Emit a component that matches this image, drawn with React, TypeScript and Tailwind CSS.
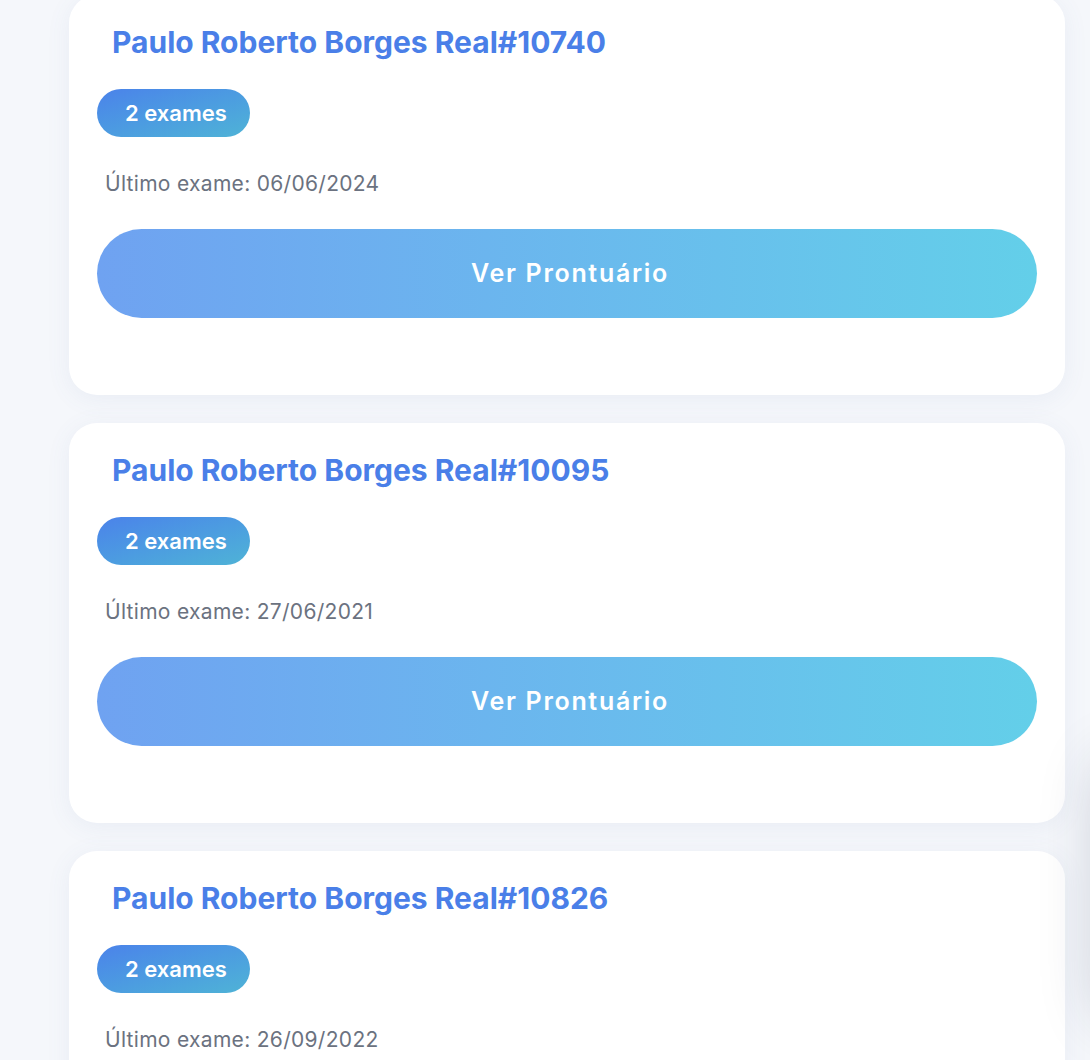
const patients = [
  { name: "Paulo Roberto Borges Real#10740", exams: 2, last: "06/06/2024" },
  { name: "Paulo Roberto Borges Real#10095", exams: 2, last: "27/06/2021" },
  { name: "Paulo Roberto Borges Real#10826", exams: 2, last: "26/09/2022" },
];

function PatientCard({ name, exams, last }: { name: string; exams: number; last: string }) {
  return (
    <li className="flex flex-col bg-white rounded-[28px] shadow-[0_4px_24px_rgba(90,110,170,0.08)] px-7 pt-[26px] pb-[77px] h-[400px] shrink-0">
      <h2 className="pl-[15px] text-[30px] leading-[42px] font-bold text-[#4a7fe8]">
        {name}
      </h2>
      <div className="mt-[26px]">
        <span className="inline-flex items-center h-12 pl-[28px] pr-[23px] rounded-full bg-linear-to-br from-[#4b82ea] to-[#4fb3d6] text-white text-[22px] font-semibold">
          {exams} exames
        </span>
      </div>
      <p className="mt-[33px] pl-2 text-[21px] leading-[28px] tracking-[0.3px] text-[#6b7280]">
        Último exame: {last}
      </p>
      <button className="mt-[31px] h-[89px] w-full shrink-0 rounded-full bg-linear-to-r from-[#6fa2f1] to-[#63cfe9] pl-[6px] text-white text-[25px] font-semibold tracking-[1.7px]">
        Ver Prontuário
      </button>
    </li>
  );
}

export default function App() {
  return (
    <div className="relative h-[1060px] overflow-hidden bg-[#f5f7fb] font-['Inter',sans-serif]">
      <ul className="flex flex-col gap-7 ml-[69px] w-[996px] -mt-[5px]">
        {patients.map((p) => (
          <PatientCard key={p.name} {...p} />
        ))}
      </ul>
      {/* floating panel just off-screen, only its shadow shows */}
      <div className="absolute left-[1100px] top-[760px] w-[200px] h-[260px] rounded-3xl bg-white shadow-[0_0_60px_rgba(30,40,70,0.22)]" />
    </div>
  );
}
